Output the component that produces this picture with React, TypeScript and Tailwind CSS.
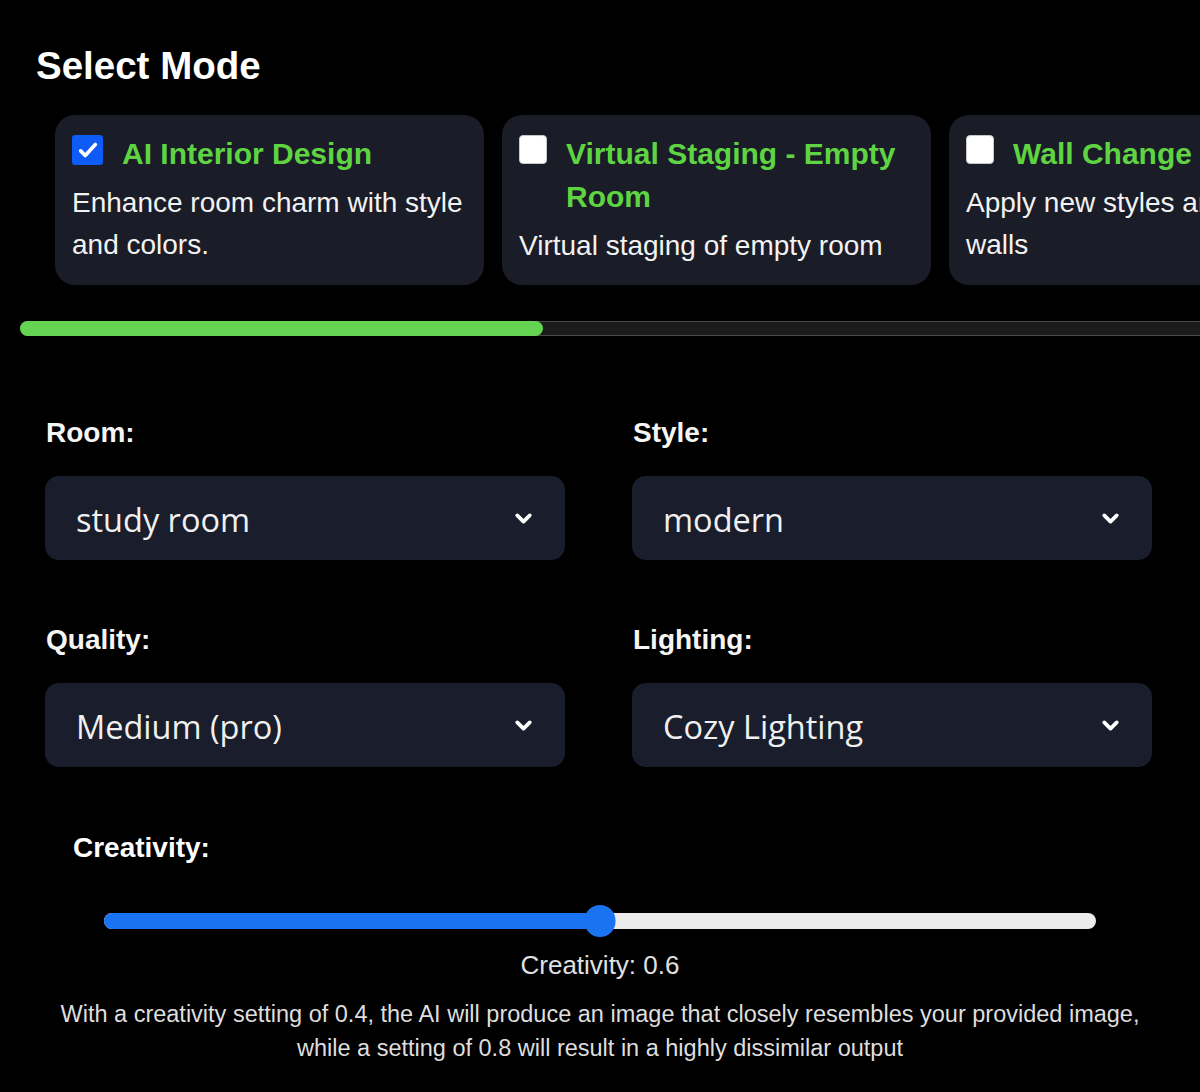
import { ChevronDown } from "lucide-react";

const modes = [
  { title: "AI Interior Design", desc: "Enhance room charm with style and colors.", checked: true },
  { title: "Virtual Staging - Empty Room", desc: "Virtual staging of empty room", checked: false },
  { title: "Wall Change", desc: "Apply new styles and colors to walls", checked: false },
];

const fields = [
  { label: "Room:", value: "study room" },
  { label: "Style:", value: "modern" },
  { label: "Quality:", value: "Medium (pro)" },
  { label: "Lighting:", value: "Cozy Lighting" },
];

function Checkbox({ checked }: { checked: boolean }) {
  if (checked) {
    return (
      <div className="w-[31px] h-[30px] shrink-0 rounded-[3px] bg-[#0f5bf5] flex items-center justify-center">
        <svg width="22" height="22" viewBox="0 0 24 24" fill="none" stroke="white" strokeWidth="4" strokeLinecap="round" strokeLinejoin="round">
          <path d="M4 13l5 5L20 6" />
        </svg>
      </div>
    );
  }
  return <div className="w-[28px] h-[29px] shrink-0 rounded-[4px] bg-white border border-[#c8c8c8]" />;
}

export default function App() {
  return (
    <div className="min-h-[1092px] bg-black text-white font-['Liberation_Sans',Arial,sans-serif] overflow-hidden">
      <h2 className="pt-[44px] pl-[36px] text-[38.5px] leading-[44px] font-bold">Select Mode</h2>

      {/* Mode cards */}
      <div className="ml-[20px] mt-[27px] overflow-hidden">
        <div className="flex gap-[18px] pl-[35px]">
          {modes.map((m) => (
            <div key={m.title} className="w-[429px] h-[170px] shrink-0 rounded-[20px] bg-[#1a1c27] pt-[17px] px-[17px]">
              <div className="flex items-start gap-[19px]">
                <div className="pt-[3px]">
                  <Checkbox checked={m.checked} />
                </div>
                <div className="text-[30px] leading-[43px] font-bold text-[#5fd443] whitespace-nowrap">
                  {m.title === "Virtual Staging - Empty Room" ? (
                    <>
                      Virtual Staging - Empty
                      <br />
                      Room
                    </>
                  ) : (
                    m.title
                  )}
                </div>
              </div>
              <p className="mt-[7px] text-[28px] leading-[42px] text-[#f2f2f2]">{m.desc}</p>
            </div>
          ))}
        </div>
      </div>

      {/* Horizontal scrollbar */}
      <div className="ml-[20px] mt-[36px] h-[15px] rounded-l-full bg-[#1b1b1b] border-y border-[#4a4a4a] relative">
        <div className="absolute -top-px -bottom-px left-0 w-[523px] rounded-full bg-[#64d452]" />
      </div>

      {/* Selects */}
      <div className="mt-[82px] ml-[45px] w-[1107px] grid grid-cols-2 gap-x-[67px] gap-y-[65px]">
        {fields.map((f) => (
          <div key={f.label}>
            <label className="block pl-[1px] text-[28px] leading-[30px] font-bold text-[#f5f5f5]">{f.label}</label>
            <div className="mt-[28px] h-[84px] rounded-[14px] bg-[#1a1d2b] flex items-center justify-between pl-[31px] pr-[29px]">
              <span className="text-[32.5px] leading-[40px] pt-[3px] font-['Open_Sans',sans-serif] text-[#f0f0f0]">{f.value}</span>
              <ChevronDown size={25} strokeWidth={3.6} className="text-white" />
            </div>
          </div>
        ))}
      </div>

      {/* Creativity */}
      <div className="mt-[66px]">
        <div className="pl-[73px] text-[28px] leading-[30px] font-bold">Creativity:</div>
        <div className="mt-[42px] mx-[104px] h-[32px] flex items-center relative">
          <div className="h-[16px] w-full rounded-full bg-[#ececec] overflow-hidden">
            <div className="h-full w-1/2 bg-[#1a73f0]" />
          </div>
          <div className="absolute left-1/2 top-0 -translate-x-1/2 w-[31px] h-[32px] rounded-full bg-[#1a73f0]" />
        </div>
        <div className="mt-[13px] text-center text-[26px] leading-[30px] text-[#e0e0e0]">Creativity: 0.6</div>
        <p className="mt-[17px] text-center text-[23.5px] leading-[34px] text-[#dedede]">
          With a creativity setting of 0.4, the AI will produce an image that closely resembles your provided image,
          <br />
          while a setting of 0.8 will result in a highly dissimilar output
        </p>
      </div>
    </div>
  );
}
